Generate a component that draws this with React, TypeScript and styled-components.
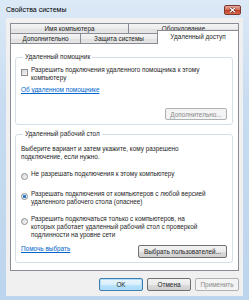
import React from 'react';
import styled, { createGlobalStyle, css } from 'styled-components';

const GlobalStyle = createGlobalStyle`
  html, body {
    margin: 0;
    padding: 0;
    background: #ffffff;
  }
  body {
    font-family: "Liberation Sans", Arial, sans-serif;
    font-size: 6.4px;
    color: #1e1e1e;
  }
`;

// окно с рамкой Aero
const Window = styled.div`
  width: 249px;
  height: 300px;
  box-sizing: border-box;
  display: flex;
  flex-direction: column;
  background: linear-gradient(180deg, #dce9f7 0%, #c7dcf1 35%, #bcd4ed 100%);
`;

const TitleBar = styled.div`
  height: 18px;
  display: flex;
  align-items: center;
  justify-content: space-between;
  padding: 1px 8px 0 6px;
  box-sizing: border-box;
`;

const Title = styled.span`
  font-size: 7px;
  color: #000;
`;

const CloseButton = styled.div`
  width: 17px;
  height: 10px;
  box-sizing: border-box;
  border: 1px solid #7b3a32;
  border-radius: 2px;
  background: linear-gradient(180deg, #e9a99b 0%, #d4705c 45%, #c3402a 55%, #d86a4e 100%);
  display: flex;
  align-items: center;
  justify-content: center;
`;

const Client = styled.div`
  flex: 1;
  margin: 0 6px 4px 6px;
  padding: 5px 4px 5px 4px;
  background: #f0f0f0;
  display: flex;
  flex-direction: column;
  box-sizing: border-box;
`;

const TabRow = styled.div`
  display: flex;
  height: 10px;
`;

const Tab = styled.div<{ $w: number; $active?: boolean }>`
  width: ${(p) => p.$w}px;
  height: 10px;
  box-sizing: border-box;
  border: 1px solid #898c95;
  border-bottom: none;
  display: flex;
  align-items: center;
  justify-content: center;
  background: linear-gradient(180deg, #f4f4f4 0%, #ececec 50%, #e0e0e0 51%, #e6e6e6 100%);
  & + & {
    margin-left: -1px;
  }
  ${(p) =>
    p.$active &&
    css`
      position: relative;
      z-index: 1;
      height: 14px;
      margin-top: -3px;
      align-items: flex-start;
      padding-top: 2px;
      background: #ffffff;
    `}
`;

const Panel = styled.div`
  border: 1px solid #898c95;
  background: #ffffff;
  padding: 9px 5px 7px 4px;
  display: flex;
  flex-direction: column;
`;

const Group = styled.fieldset<{ $gap?: number }>`
  margin: ${(p) => p.$gap || 0}px 0 0 0;
  min-width: 0;
  border: 1px solid #d5dfe5;
  border-radius: 3px;
  padding: 0 5px 4px 5px;
  display: flex;
  flex-direction: column;
`;

const Legend = styled.legend`
  padding: 0 2px;
  margin-left: 2px;
  line-height: 8px;
`;

const Text = styled.div<{ $mt?: number }>`
  line-height: 8px;
  margin-top: ${(p) => p.$mt || 0}px;
`;

const OptionRow = styled.div<{ $mt: number }>`
  display: flex;
  align-items: flex-start;
  gap: 3px;
  margin-top: ${(p) => p.$mt}px;
  line-height: 8px;
`;

const CheckBox = styled.span`
  width: 7px;
  height: 7px;
  flex: none;
  box-sizing: border-box;
  margin-top: 3px;
  border: 1px solid #8f8f8f;
  background: linear-gradient(135deg, #d2d5da 0%, #eeeeee 70%, #f8f8f8 100%);
`;

const Radio = styled.span<{ $checked?: boolean }>`
  width: 7px;
  height: 7px;
  flex: none;
  box-sizing: border-box;
  margin-top: 3px;
  border-radius: 50%;
  border: 1px solid #8f8f8f;
  background: ${(p) =>
    p.$checked
      ? 'radial-gradient(circle, #2f6ec0 0%, #3a86d8 45%, #e6eef6 55%, #f4f4f4 100%)'
      : 'linear-gradient(135deg, #d2d5da 0%, #f0f0f0 70%, #fafafa 100%)'};
`;

const Link = styled.a<{ $mt?: number }>`
  color: #0066cc;
  text-decoration: underline;
  line-height: 8px;
  margin-top: ${(p) => p.$mt || 0}px;
  align-self: flex-start;
  cursor: pointer;
`;

const Button = styled.div<{ $w: number; $h?: number; $kind?: 'default' | 'disabled' }>`
  width: ${(p) => p.$w}px;
  height: ${(p) => p.$h || 13}px;
  box-sizing: border-box;
  flex: none;
  display: flex;
  align-items: center;
  justify-content: center;
  border: 1px solid #707070;
  border-radius: 2px;
  color: #1e1e1e;
  background: linear-gradient(180deg, #f2f2f2 0%, #ebebeb 50%, #dddddd 51%, #cfcfcf 100%);
  ${(p) =>
    p.$kind === 'default' &&
    css`
      border-color: #3c7fb1;
      background: linear-gradient(180deg, #eaf6fd 0%, #d9f0fc 50%, #bee6fd 51%, #a7d9f5 100%);
      box-shadow: inset 0 0 0 1px #b5dcf5;
    `}
  ${(p) =>
    p.$kind === 'disabled' &&
    css`
      border-color: #adb2b5;
      background: #f4f4f4;
      color: #8a8a8a;
    `}
`;

const EndButton = styled(Button)<{ $mt: number }>`
  align-self: flex-end;
  margin-top: ${(p) => p.$mt}px;
`;

const BottomRow = styled.div`
  display: flex;
  align-items: center;
  justify-content: space-between;
  margin-top: 6px;
`;

const DialogButtons = styled.div`
  display: flex;
  justify-content: flex-end;
  gap: 4px;
  margin-top: 7px;
`;

const App: React.FC = () => {
  return (
    <>
      <GlobalStyle />
      <Window>
        <TitleBar>
          <Title>Свойства системы</Title>
          <CloseButton>
            <svg width="7" height="6" viewBox="0 0 7 6">
              <path d="M1 0.8 L6 5.2 M6 0.8 L1 5.2" stroke="#5a1f18" strokeWidth="2.2" />
              <path d="M1 0.8 L6 5.2 M6 0.8 L1 5.2" stroke="#ffffff" strokeWidth="1.2" />
            </svg>
          </CloseButton>
        </TitleBar>

        <Client>
          {/* вкладки */}
          <TabRow>
            <Tab $w={119}>Имя компьютера</Tab>
            <Tab $w={111}>Оборудование</Tab>
          </TabRow>
          <TabRow>
            <Tab $w={71}>Дополнительно</Tab>
            <Tab $w={78}>Защита системы</Tab>
            <Tab $w={82} $active>Удаленный доступ</Tab>
          </TabRow>

          <Panel>
            <Group>
              <Legend>Удаленный помощник</Legend>
              <OptionRow $mt={5}>
                <CheckBox />
                <span>
                  Разрешить подключения удаленного помощника к этому
                  <br />
                  компьютеру
                </span>
              </OptionRow>
              <Link $mt={4}>Об удаленном помощнике</Link>
              <EndButton $w={62} $h={12} $mt={14} $kind="disabled">
                Дополнительно...
              </EndButton>
            </Group>

            <Group $gap={5}>
              <Legend>Удаленный рабочий стол</Legend>
              <Text $mt={7}>
                Выберите вариант и затем укажите, кому разрешено
                <br />
                подключение, если нужно.
              </Text>
              <OptionRow $mt={9}>
                <Radio />
                <span>Не разрешать подключения к этому компьютеру</span>
              </OptionRow>
              <OptionRow $mt={10}>
                <Radio $checked />
                <span>
                  Разрешать подключения от компьютеров с любой версией
                  <br />
                  удаленного рабочего стола (опаснее)
                </span>
              </OptionRow>
              <OptionRow $mt={9}>
                <Radio />
                <span>
                  Разрешить подключаться только с компьютеров, на
                  <br />
                  которых работает удаленный рабочий стол с проверкой
                  <br />
                  подлинности на уровне сети
                </span>
              </OptionRow>
              <BottomRow>
                <Link>Помочь выбрать</Link>
                <Button $w={89}>Выбрать пользователей...</Button>
              </BottomRow>
            </Group>
          </Panel>

          <DialogButtons>
            <Button $w={44} $kind="default">OK</Button>
            <Button $w={44}>Отмена</Button>
            <Button $w={44} $kind="disabled">Применить</Button>
          </DialogButtons>
        </Client>
      </Window>
    </>
  );
};

export default App;
